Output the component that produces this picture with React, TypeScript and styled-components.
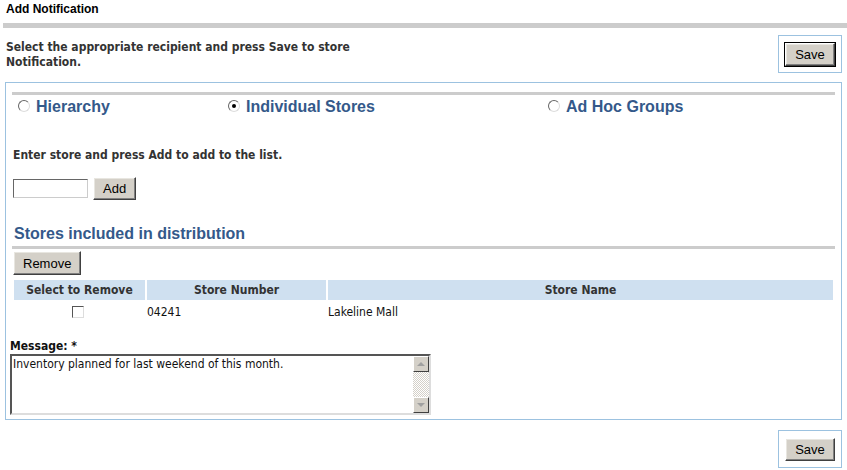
import { ReactElement } from 'react';
import styled, { createGlobalStyle } from 'styled-components';

//
// Styles
//

const GlobalStyle = createGlobalStyle`
  html, body {
    margin: 0;
    padding: 0;
    background: #fff;
  }
  body {
    font-family: "DejaVu Sans Condensed", "DejaVu Sans", Tahoma, sans-serif;
    font-size: 12px;
    color: #222;
  }
`;

const PageDiv = styled.div`
  width: 847px;
  height: 470px;
  overflow: hidden;
`;

const TitleDiv = styled.div`
  padding: 2px 6px 0;
  height: 21px;
  font-family: "Liberation Sans", Arial, sans-serif;
  font-size: 12px;
  line-height: 15px;
  font-weight: 700;
  color: #000;
`;

const GrayBar = styled.div<{ $inset?: number; $height?: number }>`
  margin-left: ${({ $inset }) => $inset ?? 0}px;
  height: ${({ $height }) => $height ?? 3}px;
  background: #cccccc;
`;

const TopRow = styled.div`
  display: flex;
  justify-content: space-between;
  align-items: flex-start;
  padding: 7px 5px 0 6px;
`;

const IntroP = styled.p`
  margin: 5px 0 0;
  width: 372px;
  font-weight: 700;
  line-height: 15px;
  color: #333;
`;

const ButtonBox = styled.div`
  display: flex;
  align-items: center;
  justify-content: center;
  box-sizing: border-box;
  width: 64px;
  height: 38px;
  border: 1px solid #9cc2e0;
`;

const BottomRow = styled.div`
  display: flex;
  justify-content: flex-end;
  padding: 10px 5px 0;
`;

const ClassicButton = styled.button<{ $default?: boolean; $tall?: boolean }>`
  height: ${({ $tall }) => ($tall ? 24 : 23)}px;
  padding: 0 9px;
  font-family: "Liberation Sans", Arial, sans-serif;
  font-size: 13px;
  color: #000;
  background: #d4d0c8;
  border: 1px solid;
  border-color: #fff #404040 #404040 #fff;
  box-shadow: inset -1px -1px 0 #808080, inset 1px 1px 0 #e8e6e0
    ${({ $default }) => ($default ? ', 0 0 0 1px #000' : '')};
  cursor: pointer;
`;

const PanelDiv = styled.div`
  margin: 9px 5px 0;
  border: 1px solid #9cc2e0;
  padding: 9px 6px 4px;
`;

const RadioRow = styled.div`
  display: grid;
  grid-template-columns: 210px 320px 1fr;
  padding: 1px 0 0 6px;
  height: 22px;
`;

const RadioLabel = styled.label`
  display: flex;
  align-items: center;
  gap: 6px;
  font-family: "Liberation Sans", Arial, sans-serif;
  font-size: 16px;
  font-weight: 700;
  color: #34598a;
  cursor: pointer;
`;

const RadioDot = styled.span<{ $checked?: boolean }>`
  position: relative;
  width: 10px;
  height: 10px;
  border-radius: 50%;
  border: 1px solid;
  border-color: #666 #ddd #ddd #666;
  background: #fff;
  margin-top: -2px;

  &::after {
    content: '';
    display: ${({ $checked }) => ($checked ? 'block' : 'none')};
    position: absolute;
    left: 3px;
    top: 3px;
    width: 4px;
    height: 4px;
    border-radius: 50%;
    background: #000;
  }
`;

const HintP = styled.p`
  margin: 30px 0 0 1px;
  line-height: 14px;
  font-weight: 700;
  color: #333;
`;

const AddRow = styled.div`
  display: flex;
  align-items: center;
  gap: 5px;
  margin: 15px 0 0 1px;
`;

const StoreInput = styled.input`
  box-sizing: border-box;
  width: 75px;
  height: 19px;
  border: 1px solid;
  border-color: #666 #ccc #ccc #666;
  padding: 0 2px;
  font: inherit;
`;

const SectionH3 = styled.h3`
  margin: 24px 0 0;
  padding: 1px 0 3px 2px;
  line-height: 18px;
  border-bottom: 3px solid #cccccc;
  font-family: "Liberation Sans", Arial, sans-serif;
  font-size: 16px;
  font-weight: 700;
  color: #34598a;
`;

const RemoveRow = styled.div`
  display: flex;
  margin: 2px 0 0 1px;
`;

const StoreTable = styled.table`
  width: 100%;
  margin-top: 3px;
  border-collapse: separate;
  border-spacing: 2px;
`;

const HeadCell = styled.th<{ $width?: number }>`
  width: ${({ $width }) => ($width ? `${$width}px` : 'auto')};
  height: 20px;
  padding: 0;
  background: #cfe0f0;
  font-weight: 700;
  color: #333;
  text-align: center;
`;

const BodyCell = styled.td<{ $center?: boolean }>`
  height: 18px;
  padding: 1px 0 0;
  line-height: 18px;
  color: #111;
  text-align: ${({ $center }) => ($center ? 'center' : 'left')};
`;

const CheckBoxSpan = styled.span`
  display: inline-block;
  width: 10px;
  height: 10px;
  border: 1px solid;
  border-color: #555 #ddd #ddd #555;
  background: #fff;
  vertical-align: middle;
  margin: -2px 0 0 -4px;
`;

const MessageDiv = styled.div`
  margin: 17px 0 0 -2px;
`;

const MessageLabel = styled.div`
  font-weight: 700;
  color: #111;
  line-height: 13px;
`;

const TextBox = styled.div`
  display: flex;
  margin-top: 1px;
  width: 421px;
  height: 61px;
  box-sizing: border-box;
  border: 2px solid;
  border-color: #555 #ddd #ddd #555;
  background: #fff;
`;

const MessageArea = styled.textarea`
  flex: 1;
  border: none;
  outline: none;
  resize: none;
  padding: 1px 1px;
  font: inherit;
  line-height: 14px;
  color: #111;
  overflow: hidden;
`;

const ScrollBar = styled.div`
  width: 16px;
  display: flex;
  flex-direction: column;
  background-color: #e8e8e8;
  background-image: repeating-conic-gradient(#d4d0c8 0 25%, #fff 0 50%);
  background-size: 2px 2px;
`;

const ScrollButton = styled.div<{ $down?: boolean }>`
  display: flex;
  align-items: center;
  justify-content: center;
  height: 16px;
  box-sizing: border-box;
  margin-top: ${({ $down }) => ($down ? 'auto' : '0')};
  background: #d4d0c8;
  border: 1px solid;
  border-color: #fff #404040 #404040 #fff;

  &::after {
    content: '';
    width: 0;
    height: 0;
    border-left: 4px solid transparent;
    border-right: 4px solid transparent;
    ${({ $down }) => ($down
    ? 'border-top: 4px solid #a0a0a0;'
    : 'border-bottom: 4px solid #a0a0a0;')}
  }
`;

//
// Component
//

const stores = [{ number: '04241', name: 'Lakeline Mall' }];

const App = (): ReactElement => (
  <PageDiv>
    <GlobalStyle />
    <TitleDiv>Add Notification</TitleDiv>
    <GrayBar $inset={3} $height={5} />
    <TopRow>
      <IntroP>Select the appropriate recipient and press Save to store Notification.</IntroP>
      <ButtonBox>
        <ClassicButton $default>Save</ClassicButton>
      </ButtonBox>
    </TopRow>
    <PanelDiv>
      <GrayBar />
      <RadioRow>
        <RadioLabel>
          <RadioDot />
          Hierarchy
        </RadioLabel>
        <RadioLabel>
          <RadioDot $checked />
          Individual Stores
        </RadioLabel>
        <RadioLabel>
          <RadioDot />
          Ad Hoc Groups
        </RadioLabel>
      </RadioRow>
      <HintP>Enter store and press Add to add to the list.</HintP>
      <AddRow>
        <StoreInput />
        <ClassicButton>Add</ClassicButton>
      </AddRow>
      <SectionH3>Stores included in distribution</SectionH3>
      <RemoveRow>
        <ClassicButton $tall>Remove</ClassicButton>
      </RemoveRow>
      <StoreTable>
        <thead>
          <tr>
            <HeadCell $width={131}>Select to Remove</HeadCell>
            <HeadCell $width={179}>Store Number</HeadCell>
            <HeadCell>Store Name</HeadCell>
          </tr>
        </thead>
        <tbody>
          {stores.map((store) => (
            <tr key={store.number}>
              <BodyCell $center><CheckBoxSpan /></BodyCell>
              <BodyCell>{store.number}</BodyCell>
              <BodyCell>{store.name}</BodyCell>
            </tr>
          ))}
        </tbody>
      </StoreTable>
      <MessageDiv>
        <MessageLabel>Message: *</MessageLabel>
        <TextBox>
          <MessageArea defaultValue="Inventory planned for last weekend of this month." />
          <ScrollBar>
            <ScrollButton />
            <ScrollButton $down />
          </ScrollBar>
        </TextBox>
      </MessageDiv>
    </PanelDiv>
    <BottomRow>
      <ButtonBox>
        <ClassicButton>Save</ClassicButton>
      </ButtonBox>
    </BottomRow>
  </PageDiv>
);

export default App;
